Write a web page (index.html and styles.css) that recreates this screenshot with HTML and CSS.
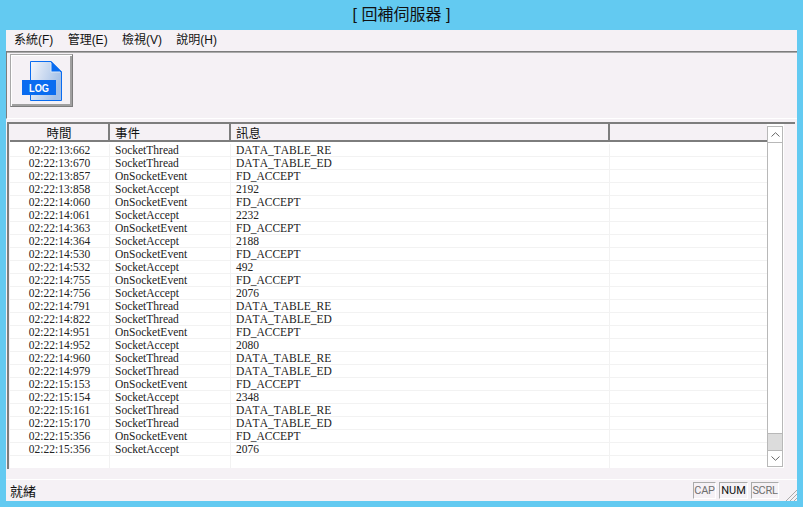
FILE: index.html
```html
<!DOCTYPE html>
<html lang="zh-Hant">
<head>
<meta charset="utf-8">
<title>回補伺服器</title>
<link rel="stylesheet" href="styles.css">
</head>
<body>
<div class="window">
  <div class="titlebar">[ 回補伺服器 ]</div>
  <div class="client">
    <div class="menubar">
      <span class="menu">系統(F)</span>
      <span class="menu">管理(E)</span>
      <span class="menu">檢視(V)</span>
      <span class="menu">說明(H)</span>
    </div>
    <div class="toolbar">
      <button class="toolbtn" type="button" aria-label="LOG">
        <svg class="logicon" width="42" height="42" viewBox="0 0 42 42">
          <defs>
            <linearGradient id="page" x1="0" y1="0" x2="1" y2="0.4">
              <stop offset="0" stop-color="#f4f6fb"/>
              <stop offset="1" stop-color="#a3bfe6"/>
            </linearGradient>
          </defs>
          <path d="M9.500 1.500H30L40.500 12V40.500H9.500Z" fill="url(#page)" stroke="#0a6cf0"/>
          <path d="M30 1L41 12H30Z" fill="#0a6cf0"/>
          <path d="M30 3V12H39" fill="none" stroke="#dce8f8"/>
          <rect x="1" y="20" width="34" height="15" fill="#0a6cf0"/>
          <text class="logtext" x="8" y="32" textLength="20" lengthAdjust="spacingAndGlyphs">LOG</text>
        </svg>
      </button>
    </div>
    <div class="listframe">
      <div class="listinner">
        <div class="listmain">
          <div class="listhead">
            <div class="hcell c1 center">時間</div>
            <div class="hcell c2">事件</div>
            <div class="hcell c3">訊息</div>
            <div class="hcell c4"></div>
          </div>
          <div class="rows">
            <div class="row"><div class="cell c1 center">02:22:13:662</div><div class="cell c2">SocketThread</div><div class="cell c3">DATA_TABLE_RE</div><div class="cell c4"></div></div>
            <div class="row"><div class="cell c1 center">02:22:13:670</div><div class="cell c2">SocketThread</div><div class="cell c3">DATA_TABLE_ED</div><div class="cell c4"></div></div>
            <div class="row"><div class="cell c1 center">02:22:13:857</div><div class="cell c2">OnSocketEvent</div><div class="cell c3">FD_ACCEPT</div><div class="cell c4"></div></div>
            <div class="row"><div class="cell c1 center">02:22:13:858</div><div class="cell c2">SocketAccept</div><div class="cell c3">2192</div><div class="cell c4"></div></div>
            <div class="row"><div class="cell c1 center">02:22:14:060</div><div class="cell c2">OnSocketEvent</div><div class="cell c3">FD_ACCEPT</div><div class="cell c4"></div></div>
            <div class="row"><div class="cell c1 center">02:22:14:061</div><div class="cell c2">SocketAccept</div><div class="cell c3">2232</div><div class="cell c4"></div></div>
            <div class="row"><div class="cell c1 center">02:22:14:363</div><div class="cell c2">OnSocketEvent</div><div class="cell c3">FD_ACCEPT</div><div class="cell c4"></div></div>
            <div class="row"><div class="cell c1 center">02:22:14:364</div><div class="cell c2">SocketAccept</div><div class="cell c3">2188</div><div class="cell c4"></div></div>
            <div class="row"><div class="cell c1 center">02:22:14:530</div><div class="cell c2">OnSocketEvent</div><div class="cell c3">FD_ACCEPT</div><div class="cell c4"></div></div>
            <div class="row"><div class="cell c1 center">02:22:14:532</div><div class="cell c2">SocketAccept</div><div class="cell c3">492</div><div class="cell c4"></div></div>
            <div class="row"><div class="cell c1 center">02:22:14:755</div><div class="cell c2">OnSocketEvent</div><div class="cell c3">FD_ACCEPT</div><div class="cell c4"></div></div>
            <div class="row"><div class="cell c1 center">02:22:14:756</div><div class="cell c2">SocketAccept</div><div class="cell c3">2076</div><div class="cell c4"></div></div>
            <div class="row"><div class="cell c1 center">02:22:14:791</div><div class="cell c2">SocketThread</div><div class="cell c3">DATA_TABLE_RE</div><div class="cell c4"></div></div>
            <div class="row"><div class="cell c1 center">02:22:14:822</div><div class="cell c2">SocketThread</div><div class="cell c3">DATA_TABLE_ED</div><div class="cell c4"></div></div>
            <div class="row"><div class="cell c1 center">02:22:14:951</div><div class="cell c2">OnSocketEvent</div><div class="cell c3">FD_ACCEPT</div><div class="cell c4"></div></div>
            <div class="row"><div class="cell c1 center">02:22:14:952</div><div class="cell c2">SocketAccept</div><div class="cell c3">2080</div><div class="cell c4"></div></div>
            <div class="row"><div class="cell c1 center">02:22:14:960</div><div class="cell c2">SocketThread</div><div class="cell c3">DATA_TABLE_RE</div><div class="cell c4"></div></div>
            <div class="row"><div class="cell c1 center">02:22:14:979</div><div class="cell c2">SocketThread</div><div class="cell c3">DATA_TABLE_ED</div><div class="cell c4"></div></div>
            <div class="row"><div class="cell c1 center">02:22:15:153</div><div class="cell c2">OnSocketEvent</div><div class="cell c3">FD_ACCEPT</div><div class="cell c4"></div></div>
            <div class="row"><div class="cell c1 center">02:22:15:154</div><div class="cell c2">SocketAccept</div><div class="cell c3">2348</div><div class="cell c4"></div></div>
            <div class="row"><div class="cell c1 center">02:22:15:161</div><div class="cell c2">SocketThread</div><div class="cell c3">DATA_TABLE_RE</div><div class="cell c4"></div></div>
            <div class="row"><div class="cell c1 center">02:22:15:170</div><div class="cell c2">SocketThread</div><div class="cell c3">DATA_TABLE_ED</div><div class="cell c4"></div></div>
            <div class="row"><div class="cell c1 center">02:22:15:356</div><div class="cell c2">OnSocketEvent</div><div class="cell c3">FD_ACCEPT</div><div class="cell c4"></div></div>
            <div class="row"><div class="cell c1 center">02:22:15:356</div><div class="cell c2">SocketAccept</div><div class="cell c3">2076</div><div class="cell c4"></div></div>
            <div class="row row-last"><div class="cell c1"></div><div class="cell c2"></div><div class="cell c3"></div><div class="cell c4"></div></div>
          </div>
        </div>
        <div class="scrollbar">
          <div class="sbtn">
            <svg width="9" height="5" viewBox="0 0 9 5"><path d="M0.500 4.500L4.500 0.700L8.500 4.500" fill="none" stroke="#666"/></svg>
          </div>
          <div class="strack"></div>
          <div class="sthumb"></div>
          <div class="sbtn sbtn-down">
            <svg width="9" height="5" viewBox="0 0 9 5"><path d="M0.500 0.500L4.500 4.300L8.500 0.500" fill="none" stroke="#666"/></svg>
          </div>
        </div>
      </div>
    </div>
    <div class="statusbar">
      <span class="status">就緒</span>
      <span class="ind cap">CAP</span>
      <span class="ind num">NUM</span>
      <span class="ind scrl">SCRL</span>
      <svg class="grip" width="13" height="13" viewBox="0 0 13 13"><path d="M13 2L2 13M13 6L6 13M13 10L10 13" stroke="#aaa" fill="none"/></svg>
    </div>
  </div>
</div>
</body>
</html>
```
FILE: styles.css
```css
* { box-sizing: border-box; }
html, body { margin: 0; padding: 0; }
body { width: 803px; height: 507px; overflow: hidden; background: #63caf1; }

.window {
  width: 803px;
  height: 507px;
  padding: 0 6px 6px;
  display: flex;
  flex-direction: column;
  font-family: "Liberation Sans", "Noto Sans CJK TC", sans-serif;
  color: #111;
}
.titlebar {
  height: 30px;
  line-height: 30px;
  text-align: center;
  font-size: 16px;
  color: #111;
}
.client {
  flex: 1;
  display: flex;
  flex-direction: column;
  background: #f5f1f5;
}
.menubar {
  height: 21px;
  display: flex;
  align-items: center;
  font-size: 12px;
  padding: 0 0 4px 8px;
  gap: 14.300px;
}
.menu { white-space: nowrap; }
.toolbar {
  height: 68px;
  flex: none;
  border-top: 1px solid #7d7d7d;
  border-left: 1px solid #7d7d7d;
  border-bottom: 1px solid #fff;
  box-shadow: inset 0 1px 0 #aaa;
  padding: 2px 0 0 3px;
}
.toolbtn {
  display: flex;
  align-items: center;
  justify-content: center;
  width: 63px;
  height: 53px;
  padding: 0;
  background: #f5f1f5;
  border: 1px solid;
  border-color: #a8a8a8 #7d7d7d #7d7d7d #a8a8a8;
  box-shadow: inset 1px 1px 0 #fff, inset -2px -2px 0 #a0a0a0;
}
.logicon { display: block; }
.logtext {
  font-family: "Liberation Sans", sans-serif;
  font-size: 11px;
  font-weight: 700;
  fill: #fff;
}
.listframe {
  margin: 3px 2px 0 1px;
  flex: none;
  height: 347px;
  border-top: 2px solid #7d7d7d;
  border-left: 2px solid #7d7d7d;
  padding: 0 11px 1px 1px;
}
.listinner {
  display: flex;
  height: 100%;
  background: #fff;
  padding-right: 1px;
}
.listmain {
  flex: 1;
  min-width: 0;
  background: #fff;
  display: flex;
  flex-direction: column;
}
.listhead {
  display: flex;
  flex: none;
  height: 18px;
  background: #f5f1f5;
  border-bottom: 2px solid #7d7d7d;
  font-size: 12.500px;
}
.hcell {
  border-right: 2px solid #7d7d7d;
  line-height: 20px;
  height: 16px;
  padding-left: 5px;
  white-space: nowrap;
}
.hcell.c4 { border-right: 0; }
.center { text-align: center; padding-left: 0; }
.c1 { width: 100px; flex: none; }
.c2 { width: 121px; flex: none; }
.c3 { width: 379px; flex: none; }
.c4 { flex: 1; }
.rows {
  flex: 1;
  padding-top: 2px;
  font-family: "Liberation Serif", serif;
  font-size: 11.500px;
  font-kerning: none;
  color: #222;
}
.row { display: flex; height: 13px; border-bottom: 1px solid #f2f2f2; }
.row-last { height: 12px; border-bottom: 0; }
.cell {
  height: 13px;
  line-height: 13px;
  padding-left: 5px;
  border-right: 1px solid #f2f2f2;
  white-space: nowrap;
}
.row-last .cell { height: 12px; }
.cell.center { padding-left: 0; }
.cell.c4 { border-right: 0; }
.scrollbar {
  width: 16px;
  flex: none;
  display: flex;
  flex-direction: column;
  background: #fff;
  border: 1px solid #b8b8b8;
  margin: 2px 0 1px;
}
.sbtn {
  height: 16px;
  flex: none;
  display: flex;
  align-items: center;
  justify-content: center;
  border-bottom: 1px solid #b8b8b8;
}
.sbtn-down { border-bottom: 0; border-top: 1px solid #b8b8b8; }
.strack { flex: 1; }
.sthumb { height: 17px; flex: none; background: #dcdcdc; border-top: 1px solid #b8b8b8; }
.statusbar {
  flex: 1;
  margin-top: 10px;
  display: flex;
  align-items: center;
  border-top: 1px solid #fff;
  padding-left: 4px;
}
.status { flex: 1; font-size: 13px; }
.ind {
  height: 17px;
  line-height: 15px;
  text-align: center;
  font-family: Roboto, sans-serif;
  font-size: 11px;
  border: 1px solid #aaa;
  border-right-color: #fff;
  border-bottom-color: #fff;
}
.cap { width: 23px; margin-right: 3px; color: #6f6f6f; letter-spacing: -0.300px; }
.num { width: 29px; margin-right: 3px; color: #111; }
.scrl { width: 28px; margin-right: 5px; color: #6f6f6f; letter-spacing: -0.300px; }
.grip { align-self: flex-end; }
```
